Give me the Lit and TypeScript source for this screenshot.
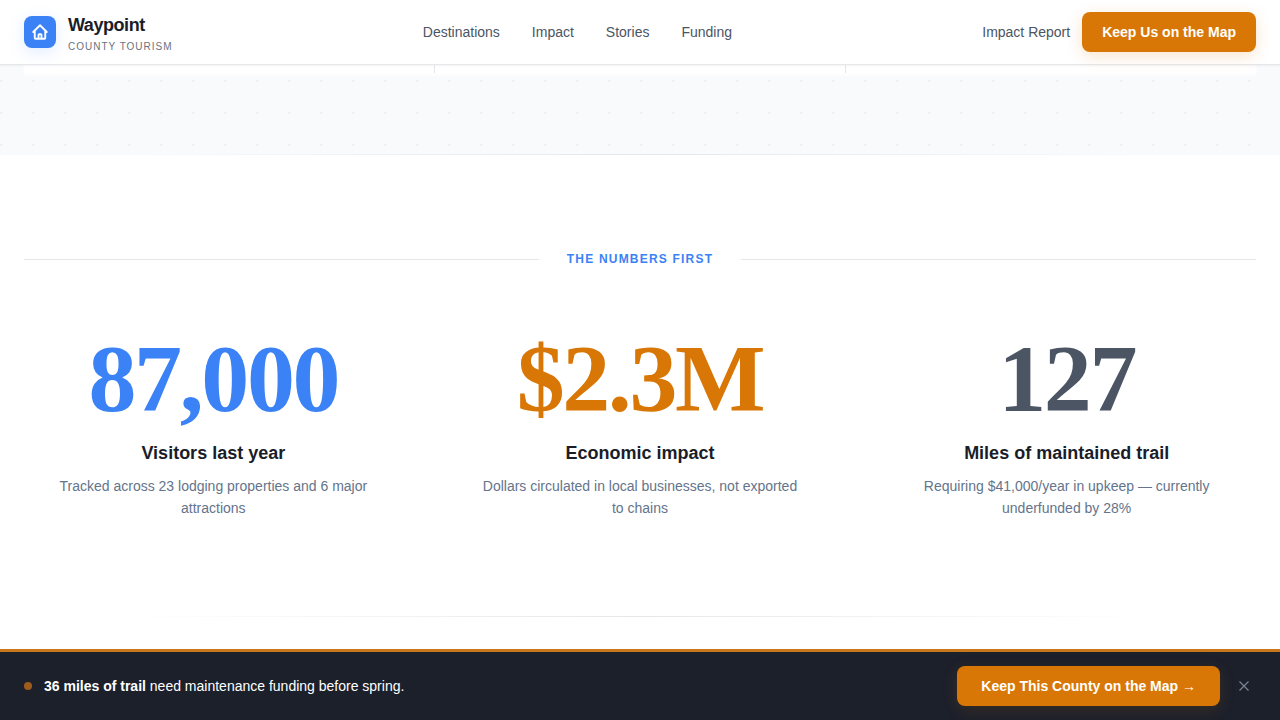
import { LitElement, html, css } from "lit";
import { customElement } from "lit/decorators.js";

@customElement("app-header")
class AppHeader extends LitElement {
  static styles = css`
    :host { display: block; }
    .bar {
      position: relative;
      z-index: 2;
      display: flex;
      align-items: center;
      justify-content: space-between;
      height: 64px;
      padding: 0 24px;
      background: #fff;
      border-bottom: 1px solid #e5e7eb;
      box-shadow: 0 1px 2px rgba(0, 0, 0, 0.05);
    }
    a { text-decoration: none; color: inherit; }
    .brand { display: flex; align-items: center; gap: 12px; }
    .logo {
      display: flex;
      align-items: center;
      justify-content: center;
      width: 32px;
      height: 32px;
      border-radius: 8px;
      background: #3b82f6;
      color: #fff;
      box-shadow: 0 4px 16px rgba(59, 130, 246, 0.15);
    }
    .names { display: flex; flex-direction: column; gap: 2px; padding-top: 2px; }
    .name { font-size: 18px; line-height: 24px; font-weight: 700; letter-spacing: -0.025em; color: #1a1d29; }
    .tag { font-size: 10px; line-height: 16px; letter-spacing: 1px; color: #6b7280; text-transform: uppercase; }
    .names { padding-top: 4px; }
    nav { display: flex; gap: 32px; }
    .link { font-size: 14px; line-height: 20px; color: #4b5563; }
    .actions { display: flex; align-items: center; gap: 12px; }
    button {
      font: inherit;
      font-size: 14px;
      line-height: 20px;
      font-weight: 700;
      color: #fff;
      background: #d97706;
      border: 0;
      border-radius: 8px;
      padding: 10px 20px;
      box-shadow: 0 4px 16px rgba(217, 119, 6, 0.2);
      cursor: pointer;
    }
  `;
  render() {
    return html`<header class="bar">
      <a class="brand" href="#">
        <span class="logo">
          <svg width="18" height="18" viewBox="0 0 24 24" fill="none" stroke="currentColor" stroke-width="2.5" stroke-linejoin="round" stroke-linecap="round" aria-hidden="true">
            <path d="M3 12l2-2m0 0l7-7 7 7M5 10v10a1 1 0 001 1h3m10-11l2 2m-2-2v10a1 1 0 01-1 1h-3m-6 0a1 1 0 001-1v-4a1 1 0 011-1h2a1 1 0 011 1v4a1 1 0 001 1m-6 0h6" />
          </svg>
        </span>
        <span class="names">
          <span class="name">Waypoint</span>
          <span class="tag">County Tourism</span>
        </span>
      </a>
      <nav>
        ${["Destinations", "Impact", "Stories", "Funding"].map((t) => html`<a class="link" href="#">${t}</a>`)}
      </nav>
      <div class="actions">
        <a class="link" href="#">Impact Report</a>
        <button type="button">Keep Us on the Map</button>
      </div>
    </header>`;
  }
}

@customElement("stats-section")
class StatsSection extends LitElement {
  static styles = css`
    :host { display: block; padding: 96px 24px 97px; }
    h2 {
      display: flex;
      align-items: center;
      gap: 28px;
      margin: 0 0 64px;
      font-size: 12px;
      line-height: 16px;
      font-weight: 700;
      letter-spacing: 0.1em;
      text-transform: uppercase;
      color: #3b82f6;
    }
    h2::before, h2::after { content: ""; flex: 1; height: 1px; background: #e5e7eb; }
    .grid { display: grid; grid-template-columns: repeat(3, 1fr); gap: 48px; }
    .stat { display: flex; flex-direction: column; align-items: center; text-align: center; }
    .value {
      font-family: "Liberation Serif", serif;
      font-size: 96px;
      line-height: 96px;
      font-weight: 700;
      letter-spacing: -0.025em;
    }
    .blue { color: #3b82f6; }
    .amber { color: #d97706; }
    .slate { color: #4b5563; }
    h3 { margin: 16px 0 12px; font-size: 18px; line-height: 20px; font-weight: 700; color: #1a1d29; }
    p { margin: 0; max-width: 320px; font-size: 14px; line-height: 22px; color: #64748b; }
  `;
  private stats = [
    { value: "87,000", tone: "blue", title: "Visitors last year", text: "Tracked across 23 lodging properties and 6 major attractions" },
    { value: "$2.3M", tone: "amber", title: "Economic impact", text: "Dollars circulated in local businesses, not exported to chains" },
    { value: "127", tone: "slate", title: "Miles of maintained trail", text: "Requiring $41,000/year in upkeep — currently underfunded by 28%" },
  ];
  render() {
    return html`<h2>The numbers first</h2>
      <div class="grid">
        ${this.stats.map((s) => html`<div class="stat">
          <div class="value ${s.tone}">${s.value}</div>
          <h3>${s.title}</h3>
          <p>${s.text}</p>
        </div>`)}
      </div>`;
  }
}

@customElement("funding-banner")
class FundingBanner extends LitElement {
  static styles = css`
    :host { display: block; }
    .bar {
      display: flex;
      align-items: center;
      justify-content: space-between;
      padding: 14px 24px;
      background: #1c202b;
      border-top: 3px solid #c8781a;
      color: #fff;
      font-size: 14px;
      line-height: 20px;
    }
    .message { display: flex; align-items: center; gap: 12px; }
    .dot { width: 8px; height: 8px; border-radius: 50%; background: #9c5d1c; }
    .actions { display: flex; align-items: center; gap: 12px; }
    button { font: inherit; border: 0; cursor: pointer; }
    .cta {
      font-weight: 700;
      color: #fff;
      background: #d97706;
      border-radius: 8px;
      padding: 10px 24px;
      box-shadow: 0 4px 16px rgba(217, 119, 6, 0.15);
    }
    .close { display: flex; padding: 6px; background: none; color: #7b8494; }
  `;
  render() {
    return html`<aside class="bar">
      <div class="message">
        <span class="dot"></span>
        <span><strong>36 miles of trail</strong> need maintenance funding before spring.</span>
      </div>
      <div class="actions">
        <button class="cta" type="button">Keep This County on the Map →</button>
        <button class="close" type="button" aria-label="Dismiss">
          <svg width="12" height="12" viewBox="0 0 12 12" fill="none" stroke="currentColor" stroke-width="1.2" aria-hidden="true"><path d="M1.5 1.5 10.5 10.5M10.5 1.5 1.5 10.5" /></svg>
        </button>
      </div>
    </aside>`;
  }
}

@customElement("app-root")
class AppRoot extends LitElement {
  static styles = css`
    :host {
      display: flex;
      flex-direction: column;
      min-height: 100vh;
      background: #fff;
      font-family: "Liberation Sans", Arial, sans-serif;
    }
    .hero {
      height: 90px;
      padding: 0 24px;
      background:
        linear-gradient(90deg, transparent 10%, #e5e7eb 50%, transparent 90%) bottom / 100% 1px no-repeat,
        radial-gradient(circle at 1px 1px, #eef1f4 1px, transparent 1px) 0 15px / 32px 32px,
        #f9fafb;
    }
    .cards {
      display: grid;
      grid-template-columns: repeat(3, 1fr);
      gap: 1px;
      height: 8px;
      background: #e5e7eb;
      box-shadow: 0 2px 4px #fff;
    }
    .cards span { background: #fff; }
    .rule { height: 1px; background: linear-gradient(90deg, transparent 10%, #e5e7eb 50%, transparent 90%); }
    funding-banner { margin-top: auto; }
  `;
  render() {
    return html`<app-header></app-header>
      <main>
        <div class="hero"><div class="cards"><span></span><span></span><span></span></div></div>
        <stats-section></stats-section>
        <div class="rule"></div>
      </main>
      <funding-banner></funding-banner>`;
  }
}
